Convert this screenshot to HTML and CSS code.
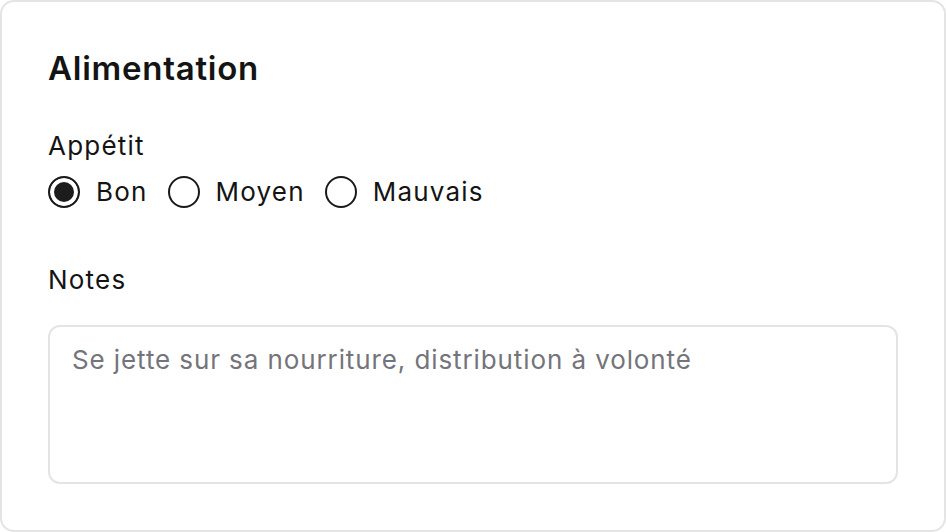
FILE: index.html
```html
<!DOCTYPE html>
<html lang="fr">
<head>
<meta charset="utf-8">
<link rel="stylesheet" href="styles.css">
</head>
<body>
<section class="card">
  <h2 class="title">Alimentation</h2>
  <div class="field">
    <span class="label">Appétit</span>
    <div class="radios">
      <label class="opt"><input type="radio" name="app" checked><span>Bon</span></label>
      <label class="opt"><input type="radio" name="app"><span>Moyen</span></label>
      <label class="opt"><input type="radio" name="app"><span>Mauvais</span></label>
    </div>
  </div>
  <div class="field notes">
    <label class="label" for="notes">Notes</label>
    <textarea id="notes" placeholder="Se jette sur sa nourriture, distribution à volonté"></textarea>
  </div>
</section>
</body>
</html>
```
FILE: styles.css
```css
html, body { margin: 0; padding: 0; background: #fff; }
body { font-family: Inter, "Noto Sans", sans-serif; color: #141414; }
.card {
  box-sizing: border-box;
  width: 946px;
  height: 532px;
  border: 2px solid #e4e4e4;
  border-radius: 14px;
  padding: 44px 46px 46px 46px;
  display: flex;
  flex-direction: column;
}
.title {
  margin: 0;
  font-size: 33px;
  font-weight: 600;
  line-height: 44px;
  letter-spacing: 0.75px;
}
.field { display: flex; flex-direction: column; }
.field:first-of-type { margin-top: 40px; }
.label { font-size: 26px; line-height: 32px; font-weight: 400; letter-spacing: 1.2px; }
.radios { display: flex; gap: 20px; margin-top: 14px; }
.opt { display: flex; align-items: center; gap: 16px; font-size: 26px; line-height: 32px; letter-spacing: 1.2px; }
.opt input {
  appearance: none;
  -webkit-appearance: none;
  margin: 0;
  width: 32px;
  height: 32px;
  border: 2px solid #1a1a1a;
  border-radius: 50%;
  box-sizing: border-box;
  background: #fff;
}
.opt input:checked {
  background: #1c1c1c;
  box-shadow: inset 0 0 0 4px #fff;
}
.notes { margin-top: 56px; }
.notes textarea {
  margin-top: 29px;
  box-sizing: border-box;
  width: 850px;
  height: 159px;
  border: 2px solid #e4e4e4;
  border-radius: 12px;
  padding: 17px 22px;
  font-family: Inter, "Noto Sans", sans-serif;
  font-size: 26px;
  letter-spacing: 0.9px;
  resize: none;
  outline: none;
}
.notes textarea::placeholder { color: #74747b; }
```
